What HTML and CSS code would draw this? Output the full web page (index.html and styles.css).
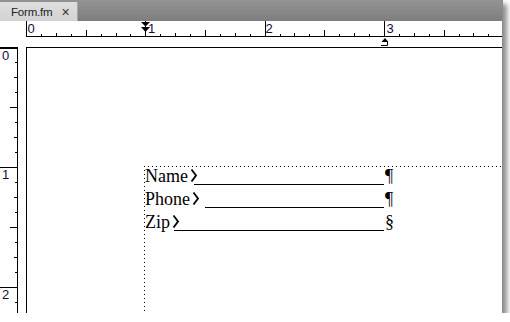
FILE: index.html
```html
<!DOCTYPE html>
<html lang="en">

<head>
    <meta charset="UTF-8">
    <title>Form.fm</title>
    <link rel="stylesheet" href="styles.css">
</head>

<body>
    <div class="window">
        <div class="tabbar">
            <div class="tab">
                <span class="tab-title">Form.fm</span>
                <span class="tab-close">×</span>
            </div>
        </div>
        <div class="workspace">
            <div class="corner"></div>

            <!-- top ruler: 1 inch = ~119px, ticks every 1/8 -->
            <svg class="hruler" width="476" height="26" viewBox="0 0 476 26">
                <g fill="#000" shape-rendering="crispEdges">
                    <rect x="0" y="15" width="476" height="1" />
                    <rect x="0" y="0" width="1" height="15" />
                    <rect x="15" y="13" width="1" height="2" />
                    <rect x="30" y="12" width="1" height="3" />
                    <rect x="45" y="13" width="1" height="2" />
                    <rect x="60" y="9" width="1" height="6" />
                    <rect x="75" y="13" width="1" height="2" />
                    <rect x="90" y="12" width="1" height="3" />
                    <rect x="104" y="13" width="1" height="2" />
                    <rect x="119" y="0" width="1" height="15" />
                    <rect x="134" y="13" width="1" height="2" />
                    <rect x="149" y="12" width="1" height="3" />
                    <rect x="164" y="13" width="1" height="2" />
                    <rect x="179" y="9" width="1" height="6" />
                    <rect x="194" y="13" width="1" height="2" />
                    <rect x="209" y="12" width="1" height="3" />
                    <rect x="224" y="13" width="1" height="2" />
                    <rect x="239" y="0" width="1" height="15" />
                    <rect x="254" y="13" width="1" height="2" />
                    <rect x="268" y="12" width="1" height="3" />
                    <rect x="283" y="13" width="1" height="2" />
                    <rect x="298" y="9" width="1" height="6" />
                    <rect x="313" y="13" width="1" height="2" />
                    <rect x="328" y="12" width="1" height="3" />
                    <rect x="343" y="13" width="1" height="2" />
                    <rect x="358" y="0" width="1" height="15" />
                    <rect x="373" y="13" width="1" height="2" />
                    <rect x="388" y="12" width="1" height="3" />
                    <rect x="403" y="13" width="1" height="2" />
                    <rect x="418" y="9" width="1" height="6" />
                    <rect x="433" y="13" width="1" height="2" />
                    <rect x="447" y="12" width="1" height="3" />
                    <rect x="462" y="13" width="1" height="2" />
                </g>
                <!-- indent markers -->
                <path d="M115 1 H124 L119.5 5.5 Z M115 6 H124 L119.5 11 Z" fill="#000" />
                <!-- tab stop -->
                <path d="M355.5 21 H362.5 L359 17 Z" fill="#000" />
                <path d="M355 24.5 H361.5 V21" fill="none" stroke="#000" stroke-width="1" />
                <g class="ruler-num">
                    <text x="1.5" y="12">0</text>
                    <text x="122" y="12">1</text>
                    <text x="239.5" y="12">2</text>
                    <text x="360.5" y="12">3</text>
                </g>
            </svg>

            <!-- side ruler -->
            <svg class="vruler" width="26" height="266" viewBox="0 0 26 266">
                <g fill="#000" shape-rendering="crispEdges">
                    <rect x="17" y="0" width="1" height="266" />
                    <rect x="0" y="0" width="17" height="2" />
                    <rect x="15" y="15" width="2" height="1" />
                    <rect x="14" y="30" width="3" height="1" />
                    <rect x="15" y="45" width="2" height="1" />
                    <rect x="10" y="60" width="7" height="1" />
                    <rect x="15" y="75" width="2" height="1" />
                    <rect x="14" y="90" width="3" height="1" />
                    <rect x="15" y="105" width="2" height="1" />
                    <rect x="0" y="120" width="17" height="1" />
                    <rect x="15" y="135" width="2" height="1" />
                    <rect x="14" y="150" width="3" height="1" />
                    <rect x="15" y="165" width="2" height="1" />
                    <rect x="10" y="180" width="7" height="1" />
                    <rect x="15" y="195" width="2" height="1" />
                    <rect x="14" y="210" width="3" height="1" />
                    <rect x="15" y="225" width="2" height="1" />
                    <rect x="0" y="240" width="17" height="1" />
                    <rect x="15" y="255" width="2" height="1" />
                </g>
                <g class="ruler-num">
                    <text x="2" y="13">0</text>
                    <text x="2" y="132">1</text>
                    <text x="2" y="252">2</text>
                </g>
            </svg>

            <div class="page">
                <div class="frame">
                    <div class="lines">
                        <div class="row">Name<svg class="tag" width="8" height="13" viewBox="0 0 8 13"><polyline points="1.5,0.5 6,6.5 1.5,12.5" /></svg><span class="rule rule-name"></span><span class="mark">¶</span></div>
                        <div class="row">Phone<svg class="tag" width="8" height="13" viewBox="0 0 8 13"><polyline points="1.5,0.5 6,6.5 1.5,12.5" /></svg><span class="rule rule-phone"></span><span class="mark">¶</span></div>
                        <div class="row">Zip<svg class="tag" width="8" height="13" viewBox="0 0 8 13"><polyline points="1.5,0.5 6,6.5 1.5,12.5" /></svg><span class="rule rule-zip"></span><span class="mark">§</span></div>
                    </div>
                </div>
            </div>
        </div>
    </div>
</body>

</html>
```

FILE: styles.css
```css
body {
    margin: 0;
    background-color: #fff;
    font-family: "Liberation Sans", Arial, sans-serif;
}

.window {
    width: 502px;
    height: 313px;
    border-right: 1px solid #8a8a8a;
    box-shadow: 4px 4px 5px rgba(0, 0, 0, 0.45);
    background-color: #fff;
}

/* document tabs */
.tabbar {
    height: 21px;
    box-sizing: border-box;
    padding-top: 2px;
    background: linear-gradient(#939393, #7e7e7e);
}

.tab {
    width: 78px;
    height: 19px;
    box-sizing: border-box;
    display: flex;
    align-items: center;
    padding-left: 11px;
    background: linear-gradient(#dedede, #d3d3d3);
    border-right: 1px solid #a6a6a6;
}

.tab-title {
    font-size: 11.5px;
    color: #222;
    letter-spacing: -0.2px;
}

.tab-close {
    margin-left: 9px;
    font-size: 14px;
    color: #333;
}

/* rulers + page */
.workspace {
    display: grid;
    grid-template-columns: 26px 1fr;
    grid-template-rows: 26px 1fr;
    height: 292px;
}

.hruler,
.vruler {
    display: block;
}

.ruler-num {
    font-family: "Liberation Sans", Arial, sans-serif;
    font-size: 13px;
    fill: #10103a;
}

.page {
    border-top: 1px solid #000;
    border-left: 1px solid #000;
    overflow: hidden;
}

.frame {
    margin: 118px 0 0 117px;
    padding: 1px 0 0 1px;
    height: 100%;
    background-image:
        linear-gradient(to right, #000 1px, transparent 1px),
        linear-gradient(to bottom, #000 1px, transparent 1px);
    background-size: 4px 1px, 1px 4px;
    background-repeat: repeat-x, repeat-y;
}

.lines {
    margin-top: -2px;
    font-family: "Liberation Serif", "Times New Roman", serif;
    font-size: 18px;
    line-height: 23px;
    color: #000;
    white-space: nowrap;
}

.tag {
    margin-left: 2px;
    vertical-align: baseline;
}

.tag polyline {
    fill: none;
    stroke: #000;
    stroke-width: 1.8;
}

.rule {
    display: inline-block;
    height: 0;
    border-bottom: 1px solid #000;
    margin-bottom: -3px;
}

.rule-name {
    width: 190px;
    margin-left: -4px;
}

.rule-phone {
    width: 179px;
    margin-left: 5px;
}

.rule-zip {
    width: 210px;
    margin-left: -6px;
}

.mark {
    margin-left: 1px;
}
```
